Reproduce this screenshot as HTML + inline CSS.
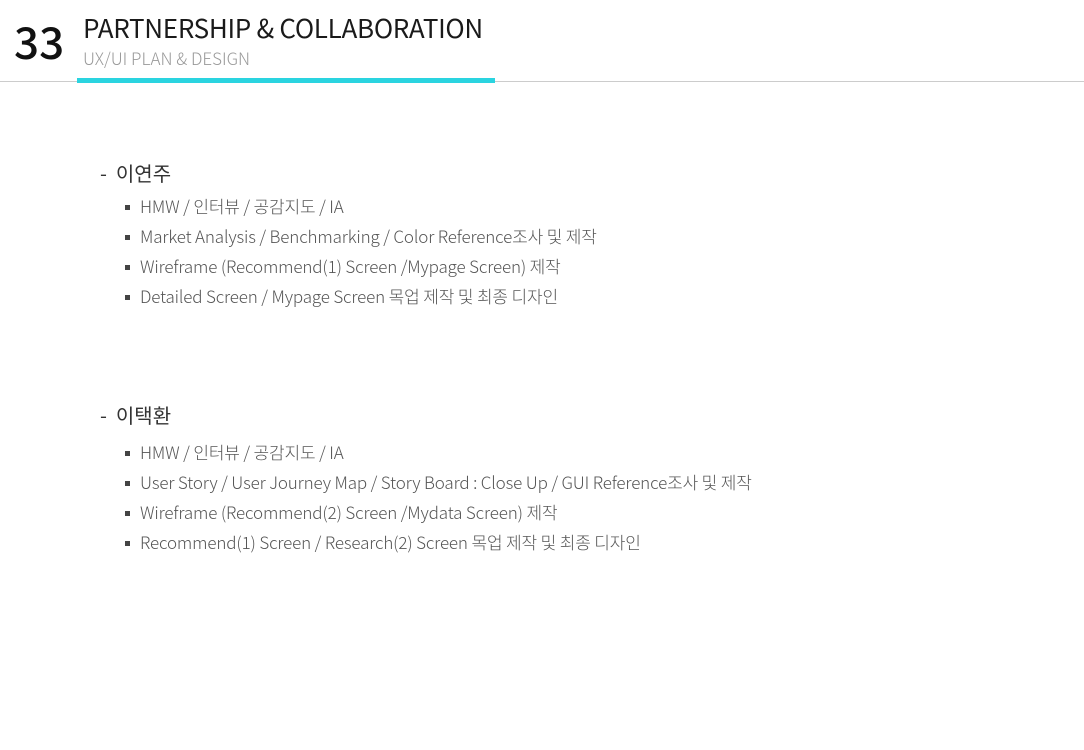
<!DOCTYPE html>
<html><head><meta charset="utf-8"><style>
body{margin:0;width:1084px;height:750px;background:#fff;position:relative;overflow:hidden;font-family:"Noto Sans CJK KR","Liberation Sans",sans-serif;}
.a{position:absolute;white-space:nowrap;}
.num{left:14px;top:14px;font-size:44px;color:#111;line-height:52px;font-weight:500;}
.t{left:83px;top:13px;font-size:26px;color:#1a1a1a;line-height:30px;letter-spacing:-0.3px;}
.s{left:83px;top:48px;font-size:17px;color:#999;line-height:20px;font-weight:300;}
.line{left:0;top:81px;width:1084px;height:1px;background:#ccc;}
.bar{left:77px;top:78px;width:418px;height:5px;background:#2ad4e0;}
.h{font-size:20px;color:#333;left:100px;line-height:24px;}
.i{font-size:17px;color:#555;left:125px;line-height:20px;font-weight:300;letter-spacing:-0.15px;}
.i:before{content:"";display:inline-block;width:5px;height:5px;background:#444;margin-right:10px;vertical-align:3px;}
</style></head><body>
<div class="a num">33</div>
<div class="a t">PARTNERSHIP &amp; COLLABORATION</div>
<div class="a s">UX/UI PLAN &amp; DESIGN</div>
<div class="a line"></div>
<div class="a bar"></div>
<div class="a h" style="top:161px">- &nbsp;이연주</div>
<div class="a i" style="top:196px">HMW / 인터뷰 / 공감지도 / IA</div>
<div class="a i" style="top:226px">Market Analysis / Benchmarking / Color Reference조사 및 제작</div>
<div class="a i" style="top:256px">Wireframe (Recommend(1) Screen /Mypage Screen) 제작</div>
<div class="a i" style="top:286px">Detailed Screen / Mypage Screen 목업 제작 및 최종 디자인</div>
<div class="a h" style="top:403px">- &nbsp;이택환</div>
<div class="a i" style="top:442px">HMW / 인터뷰 / 공감지도 / IA</div>
<div class="a i" style="top:472px">User Story / User Journey Map / Story Board : Close Up / GUI Reference조사 및 제작</div>
<div class="a i" style="top:502px">Wireframe (Recommend(2) Screen /Mydata Screen) 제작</div>
<div class="a i" style="top:532px">Recommend(1) Screen / Research(2) Screen 목업 제작 및 최종 디자인</div>
</body></html>
